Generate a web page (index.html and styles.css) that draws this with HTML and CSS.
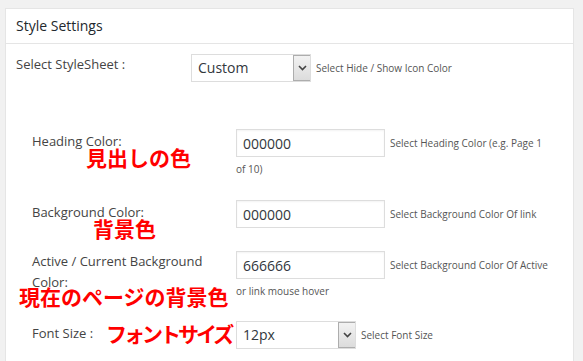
FILE: index.html
```html
<!DOCTYPE html>
<html lang="en">
<head>
    <meta charset="UTF-8">
    <meta name="viewport" content="width=device-width, initial-scale=1.0">
    <title>Style Settings</title>
    <link rel="stylesheet" href="styles.css">
</head>
<body>
    <div class="panel">
        <h3 class="panel-title">Style Settings</h3>

        <div class="panel-body">
            <div class="row row-main">
                <label class="row-label">Select StyleSheet :</label>
                <div class="row-field">
                    <div class="select select-main">
                        <span class="select-value">Custom</span>
                        <span class="select-arrow">
                            <svg width="9" height="6" viewBox="0 0 9 6"><path d="M1 1 L4.5 4.5 L8 1" fill="none" stroke="#444" stroke-width="1.6"/></svg>
                        </span>
                    </div>
                    <span class="help">Select Hide / Show Icon Color</span>
                </div>
            </div>

            <div class="options">
                <div class="row row-heading">
                    <label class="row-label">Heading Color:</label>
                    <div class="row-field">
                        <input class="text-input" type="text" value="000000">
                        <span class="help">Select Heading Color (e.g. Page 1 of 10)</span>
                    </div>
                    <span class="note note-heading">見出しの色</span>
                </div>

                <div class="row row-bg">
                    <label class="row-label">Background Color:</label>
                    <div class="row-field">
                        <input class="text-input" type="text" value="000000">
                        <span class="help">Select Background Color Of link</span>
                    </div>
                    <span class="note note-bg">背景色</span>
                </div>

                <div class="row row-active">
                    <label class="row-label">Active / Current Background Color:</label>
                    <div class="row-field">
                        <input class="text-input" type="text" value="666666">
                        <span class="help">Select Background Color Of Active or link mouse hover</span>
                    </div>
                    <span class="note note-active">現在のページの背景色</span>
                </div>

                <div class="row row-font">
                    <label class="row-label">Font Size :</label>
                    <div class="row-field">
                        <div class="select select-font">
                            <span class="select-value">12px</span>
                            <span class="select-arrow">
                                <svg width="9" height="6" viewBox="0 0 9 6"><path d="M1 1 L4.5 4.5 L8 1" fill="none" stroke="#444" stroke-width="1.6"/></svg>
                            </span>
                        </div>
                        <span class="help">Select Font Size</span>
                    </div>
                    <span class="note note-font">フォントサイズ</span>
                </div>
            </div>
        </div>
    </div>
</body>
</html>
```

FILE: styles.css
```css
/* Settings panel */
body {
    margin: 0;
    padding: 8px 9px 0 5px;
    background-color: #f1f1f1;
    font-family: "Open Sans", "Liberation Sans", sans-serif;
    color: #444;
}

.panel {
    background-color: #fff;
    border: 1px solid #e5e5e5;
    height: 360px;
}

.panel-title {
    margin: 0;
    padding: 6px 10px 7px;
    font-size: 14px;
    font-weight: normal;
    line-height: 21px;
    color: #23282d;
    border-bottom: 1px solid #e5e5e5;
}

.panel-body {
    padding: 10px 0 0 10px;
}

.row {
    position: relative;
    display: grid;
    align-items: start;
}

.row-label {
    font-size: 13px;
    line-height: 21px;
    padding-top: 2px;
}

.row-field {
    font-size: 0;
    line-height: 24px;
}

.help {
    font-size: 10px;
    color: #555;
    vertical-align: middle;
    margin-left: 5px;
}

/* first row */
.row-main {
    grid-template-columns: 175px 1fr;
}

.row-main .row-label {
    padding-top: 0;
}

/* option rows */
.options {
    padding-left: 16px;
    margin-top: 47px;
    display: flex;
    flex-direction: column;
    gap: 21px;
}

.options .row {
    grid-template-columns: 204px 314px;
}

.row-bg {
    margin-top: -2px;
}

.row-active {
    margin-top: 2px;
}

.row-active .row-label {
    padding-top: 0;
}

.row-font {
    margin-top: -3px;
}

.text-input {
    box-sizing: border-box;
    width: 149px;
    height: 28px;
    margin: 0;
    padding: 0 6px;
    border: 1px solid #ddd;
    font-family: "Open Sans", "Liberation Sans", sans-serif;
    font-size: 14px;
    color: #32373c;
    vertical-align: middle;
    box-shadow: inset 0 1px 2px rgba(0, 0, 0, 0.05);
}

.select {
    box-sizing: border-box;
    display: inline-flex;
    height: 28px;
    border: 1px solid #ddd;
    vertical-align: middle;
    background-color: #fff;
}

.select-main {
    width: 120px;
}

.select-font {
    width: 120px;
}

.select-value {
    flex: 1;
    padding-left: 6px;
    font-size: 14px;
    line-height: 26px;
    color: #32373c;
}

.select-arrow {
    width: 16px;
    display: flex;
    align-items: center;
    justify-content: center;
    border-left: 1px solid #adadad;
    border-top: 1px solid #adadad;
    border-bottom: 1px solid #adadad;
    background: linear-gradient(#f2f2f2, #dcdcdc);
}

/* red annotations */
.note {
    position: absolute;
    font-family: "Noto Sans CJK JP", sans-serif;
    font-weight: bold;
    font-size: 21px;
    line-height: 21px;
    color: #f00;
    white-space: nowrap;
}

.note-heading {
    left: 54px;
    top: 18px;
}

.note-bg {
    left: 61px;
    top: 18px;
}

.note-active {
    left: -13px;
    top: 35px;
}

.note-font {
    left: 74px;
    top: 2px;
    letter-spacing: -3px;
}
```
